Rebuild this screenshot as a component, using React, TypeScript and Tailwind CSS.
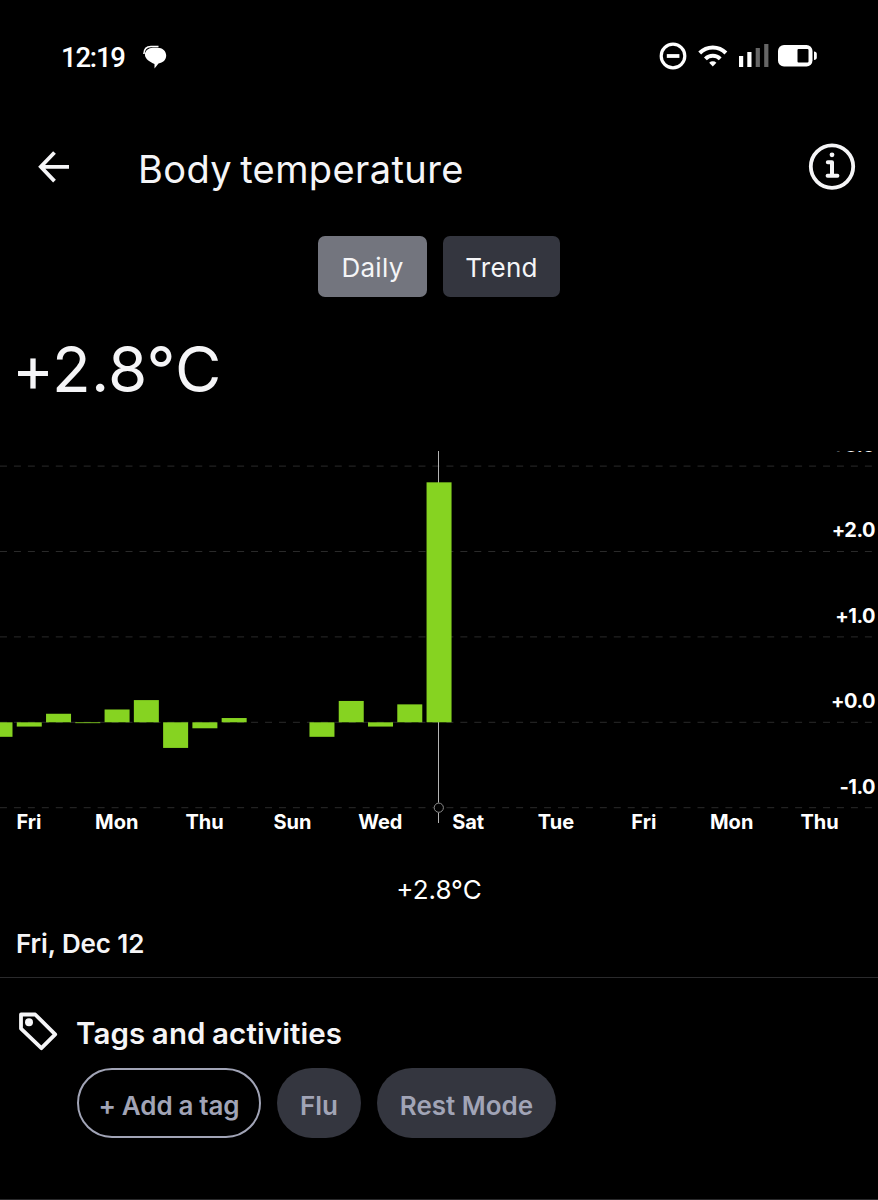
import { useState } from 'react';

const CHART_WIDTH = 878;
const CHART_TOP = 451;
const ZERO_Y = 722.3 - CHART_TOP;
const STEP_Y = 85.4;
const BAR_STEP = 29.27;
const BAR_WIDTH = 25;

// one entry per day, null where the ring was not worn
const readings: (number | null)[] = [
  -0.17, -0.05, 0.1, -0.01, 0.15, 0.26, -0.3, -0.07, 0.05, null, null,
  -0.17, 0.25, -0.05, 0.21, 2.81,
];

const dayLabels = ['Fri', 'Mon', 'Thu', 'Sun', 'Wed', 'Sat', 'Tue', 'Fri', 'Mon', 'Thu'];
const valueLabels = ['+3.0', '+2.0', '+1.0', '+0.0', '-1.0'];

function StatusBar() {
  return (
    <div className="flex h-[112px] items-center pr-[60px] pl-[61px]">
      <span className="w-[65px] pt-[3px] font-[Roboto] text-[27.5px] leading-8 font-medium tracking-[-1.2px] whitespace-nowrap text-white">
        12:19
      </span>
      <svg className="mt-0.5 ml-[16px]" width="25" height="24" viewBox="0 0 25 24" fill="none">
        <path d="M1.9 9C2 4.500 4.600 1.500 9 1.500h7.500" stroke="#fff" strokeWidth="1.6" />
        <path
          d="M11 2.800h4.500c5 0 8.700 3.300 8.700 7.800 0 4.300-3.200 7.500-7.700 7.900L12.500 23.400v-4.500C8 17.200 2.900 13.800 2.900 9.800c0-4 3.600-7 8.100-7Z"
          fill="#fff"
        />
      </svg>
      <div className="ml-auto flex items-center">
        <svg width="28" height="28" viewBox="0 0 28 28" fill="none">
          <circle cx="14" cy="14" r="11.8" stroke="#fff" strokeWidth="3.2" />
          <path d="M7.800 14h12.600" stroke="#fff" strokeWidth="3.8" />
        </svg>
        <svg className="ml-[11px]" width="30" height="24" viewBox="0 0 30 24" fill="none">
          <path d="M1.700 9a18.500 18.500 0 0 1 26.200 0" stroke="#fff" strokeWidth="4" />
          <path d="M7.400 14.800a10.500 10.500 0 0 1 14.800 0" stroke="#fff" strokeWidth="4" />
          <path d="M14.800 22.600l-3.600-3.800a5.200 5.200 0 0 1 7.200 0Z" fill="#fff" />
        </svg>
        <svg className="mb-0.5 ml-[11px]" width="30" height="24" viewBox="0 0 30 24">
          <rect x="0" y="13" width="4.2" height="11" fill="#fff" />
          <rect x="8.3" y="9" width="4.2" height="15" fill="#fff" />
          <rect x="16.7" y="5" width="4.2" height="19" fill="#666" />
          <rect x="25.2" y="1" width="4.2" height="23" fill="#666" />
        </svg>
        <svg className="ml-[9px]" width="40" height="22" viewBox="0 0 40 22">
          <rect x="0" y="0" width="34.5" height="21.5" rx="6" fill="#fff" />
          <rect x="19.5" y="4" width="11" height="13.5" rx="1" fill="#000" />
          <path d="M36 6.500c1.800 0 2.800 1 2.800 2.500v3.500c0 1.500-1 2.500-2.800 2.500Z" fill="#fff" />
        </svg>
      </div>
    </div>
  );
}

function Header() {
  return (
    <header className="flex h-[109px] items-center pr-[22px] pl-[38px]">
      <button aria-label="Back">
        <svg width="32" height="32" viewBox="0 0 32 32" fill="none" stroke="#f5f5f7" strokeWidth="3.8">
          <path d="M31 15.800H3M16.500 1.500L2.800 15.800l13.700 14.300" />
        </svg>
      </button>
      <h1 className="ml-[68px] pt-1 text-[38px] leading-[48px] tracking-[0.4px] whitespace-nowrap [word-spacing:-3px]">
        Body temperature
      </h1>
      <button aria-label="About body temperature" className="ml-auto">
        <svg width="48" height="48" viewBox="0 0 48 48" fill="none" stroke="#f5f5f7">
          <circle cx="24" cy="23.6" r="21.2" strokeWidth="3.8" />
          <circle cx="24" cy="11.8" r="2.4" fill="#f5f5f7" stroke="none" />
          <path d="M19.800 19.300H24v13.400M19.600 32.700h9.800" strokeWidth="4" strokeLinecap="round" strokeLinejoin="round" />
        </svg>
      </button>
    </header>
  );
}

function TemperatureChart() {
  const cursorX = 438.5;
  const axisY = ZERO_Y + STEP_Y;

  return (
    <div className="relative h-[398px] overflow-hidden">
      <svg className="block" width={CHART_WIDTH} height="374">
        {valueLabels.map((label, i) => (
          <line
            key={label}
            x1="0"
            x2={CHART_WIDTH}
            y1={ZERO_Y + (i - 3) * STEP_Y}
            y2={ZERO_Y + (i - 3) * STEP_Y}
            stroke="#2a2a2a"
            strokeDasharray="6.97 6.98"
          />
        ))}
        <line x1={cursorX} x2={cursorX} y1="0" y2={axisY - 5} stroke="#b4b4b4" />
        <line x1={cursorX} x2={cursorX} y1={axisY + 5} y2="372" stroke="#b4b4b4" />
        {readings.map((value, i) =>
          value === null ? null : (
            <rect
              key={i}
              x={-12.5 + i * BAR_STEP}
              y={value > 0 ? ZERO_Y - value * STEP_Y : ZERO_Y}
              width={BAR_WIDTH}
              height={Math.abs(value) * STEP_Y}
              fill="#86d321"
            />
          )
        )}
        <circle cx={cursorX + 0.3} cy={axisY} r="4.6" fill="#000" stroke="#8a8a8a" />
      </svg>

      {/* Value scale, laid over the right edge of the plot */}
      <div className="absolute top-[-18.4px] right-[3px] flex flex-col text-right text-[20px] font-bold tracking-[-0.5px] text-white">
        {valueLabels.map(label => (
          <span key={label} className="h-[85.5px] leading-6">{label}</span>
        ))}
      </div>

      {/* Day scale */}
      <div className="absolute top-[359.4px] left-[-15px] flex text-center text-[20px] leading-6 font-bold text-white">
        {dayLabels.map((label, i) => (
          <span key={i} className="w-[87.85px]">{label}</span>
        ))}
      </div>
    </div>
  );
}

export default function App() {
  const [view, setView] = useState('Daily');

  return (
    <div className="h-[1200px] w-[878px] overflow-hidden border-b border-[#2a2a2c] bg-black font-[Inter,sans-serif] text-[#f5f5f7]">
      <StatusBar />
      <Header />

      <div className="mt-[15px] flex justify-center gap-4">
        <button
          onClick={() => setView('Daily')}
          className={`h-[61px] w-[109px] rounded-[7px] pt-0.5 text-[26px] tracking-[0.3px] ${view === 'Daily' ? 'bg-[#73757e]' : 'bg-[#34363f]'}`}
        >
          Daily
        </button>
        <button
          onClick={() => setView('Trend')}
          className={`h-[61px] w-[117px] rounded-[7px] pt-0.5 text-[26px] tracking-[0.3px] ${view === 'Trend' ? 'bg-[#73757e]' : 'bg-[#34363f]'}`}
        >
          Trend
        </button>
      </div>

      <div className="h-[154px] pt-[32px] pl-[12px] text-[63.5px] leading-[80px] tracking-[0.2px]">+2.8°C</div>

      <TemperatureChart />

      <section className="h-[129px] border-b border-[#2a2a2c] pt-[25px]">
        <p className="text-center text-[26px] leading-8 text-white">+2.8°C</p>
        <p className="mt-[22px] pl-4 text-[26px] leading-8 font-semibold tracking-[-0.1px]">Fri, Dec 12</p>
      </section>

      <section className="pt-[33px] pl-[18px]">
        <div className="flex h-10 items-center">
          <svg width="40" height="40" viewBox="0 0 40 40" fill="none">
            <path
              d="M3 3.500h14.200L37.200 23.300 23.400 37.200 3 17.600Z"
              stroke="#f5f5f7"
              strokeWidth="3.8"
              strokeLinejoin="round"
            />
            <circle cx="11" cy="11.3" r="4" fill="#f5f5f7" />
          </svg>
          <h2 className="ml-[18px] pt-[3px] text-[29.5px] leading-9 font-semibold tracking-[0.1px] whitespace-nowrap [word-spacing:-1px]">
            Tags and activities
          </h2>
        </div>
        <div className="mt-[17px] ml-[59px] flex gap-4 text-[26px] font-semibold text-[#a1a4b6]">
          <button className="h-[70px] w-[184px] rounded-full border-2 border-[#a1a4b6] pt-1 tracking-[-0.1px] whitespace-nowrap [word-spacing:-0.5px]">
            + Add a tag
          </button>
          <button className="h-[70px] w-[84px] rounded-full bg-[#34363f] pt-1">Flu</button>
          <button className="h-[70px] w-[179px] rounded-full bg-[#34363f] pt-1 whitespace-nowrap">Rest Mode</button>
        </div>
      </section>
    </div>
  );
}
